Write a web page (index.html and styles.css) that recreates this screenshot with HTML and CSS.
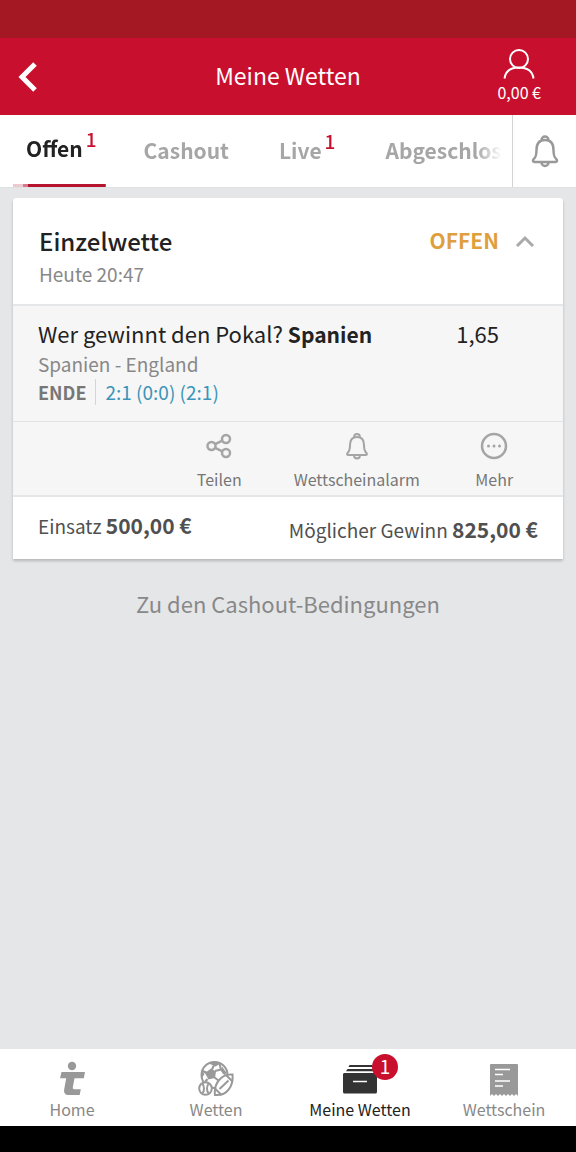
FILE: index.html
```html
<!DOCTYPE html>
<html lang="de">
<head>
<meta charset="utf-8">
<meta name="viewport" content="width=device-width, initial-scale=1">
<title>Meine Wetten</title>
<link rel="stylesheet" href="styles.css">
</head>
<body>
<svg class="defs" aria-hidden="true">
  <symbol id="bell" viewBox="0 0 28 34">
    <path d="M10.500 6a3.500 3.500 0 0 1 7 0M3.500 28h21c1.500 0 2-1.500 1-2.600-2.500-2.400-3-4-3-9.400 0-7-3-10-8.500-10S5.500 9 5.500 16c0 5.400-.5 7-3 9.400-1 1.100-.5 2.600 1 2.600zM10.500 28.500a3.500 3.500 0 0 0 7 0"/>
  </symbol>
</svg>
<div class="app">
  <div class="statusbar"></div>
  <header class="header">
    <button class="back" type="button" aria-label="Zurück">
      <svg class="back-icon" viewBox="0 0 20 30"><path d="M17 2 4 15l13 13"/></svg>
    </button>
    <h1 class="title">Meine Wetten</h1>
    <button class="account" type="button">
      <svg class="account-icon" viewBox="0 0 32 30"><circle cx="16" cy="10" r="9"/><path d="M1.500 29.500C2.500 22 8 18.500 16 18.500S29.500 22 30.500 29.500"/></svg>
      <span class="balance">0,00 €</span>
    </button>
  </header>
  <div class="tabs">
    <nav class="tab-list">
      <a class="tab active" href="#offen">Offen<sup class="count">1</sup></a>
      <a class="tab" href="#cashout">Cashout</a>
      <a class="tab" href="#live">Live<sup class="count">1</sup></a>
      <a class="tab" href="#abgeschlossen">Abgeschlossen</a>
    </nav>
    <button class="alarm" type="button" aria-label="Alarm"><svg class="alarm-icon"><use href="#bell"/></svg></button>
  </div>
  <main class="content">
    <article class="card">
      <header class="card-head">
        <div>
          <h2 class="card-title">Einzelwette</h2>
          <p class="muted">Heute 20:47</p>
        </div>
        <button class="status" type="button">OFFEN
          <svg class="chevron" viewBox="0 0 20 14"><path d="M2 13l8-8 8 8"/></svg>
        </button>
      </header>
      <section class="bet">
        <div>
          <p class="pick">Wer gewinnt den Pokal? <strong>Spanien</strong></p>
          <p class="muted">Spanien - England</p>
          <p class="result"><span class="end">ENDE</span><span class="score">2:1 (0:0) (2:1)</span></p>
        </div>
        <p class="odds">1,65</p>
      </section>
      <div class="actions">
        <button class="action share" type="button"><svg class="action-icon" viewBox="0 0 28 28"><circle cx="6.500" cy="14" r="4"/><circle cx="21" cy="7" r="4"/><circle cx="21" cy="21" r="4"/><path d="M10.100 12.200 17.400 8.700M10.100 15.800l7.300 3.500"/></svg>Teilen</button>
        <button class="action" type="button"><svg class="action-icon"><use href="#bell"/></svg>Wettscheinalarm</button>
        <button class="action" type="button"><svg class="action-icon" viewBox="0 0 28 28"><circle cx="14" cy="14" r="12"/><path class="dots" d="M8.500 14h.01M14 14h.01M19.500 14h.01"/></svg>Mehr</button>
      </div>
      <footer class="sums">
        <p>Einsatz <strong>500,00 €</strong></p>
        <p class="win">Möglicher Gewinn <strong>825,00 €</strong></p>
      </footer>
    </article>
    <a class="terms" href="#bedingungen">Zu den Cashout-Bedingungen</a>
  </main>
  <nav class="bottom">
    <a class="item" href="#home">
      <svg class="item-icon" viewBox="0 0 36 36"><circle cx="18" cy="5" r="4.200"/><path d="M7.500 11H31l-1.200 6.300h-9.300l-1.700 9c-.2 1.300.3 2 1.600 2h6.400L25.700 34H15c-3.800 0-5.500-2-4.800-5.800l2-10.900H6z"/></svg>
      Home</a>
    <a class="item" href="#wetten">
      <svg class="item-icon balls" viewBox="0 0 36 36">
        <circle cx="16.500" cy="14" r="13"/>
        <path d="M14 8.500 16.500 3M5 10l4 2M9.500 18 7 21M16.500 16.500l4 3M17 10l6-1.500M23 8.500 21.500 3M23 8.500l4 5"/>
        <path class="fill" d="m13 7.500 5 3-1 6.500-6.500 1.500L7 12zM11 2.500l5.500-2 6 2-5 3zM24 5.500l5 7-4 .5-2-4zM4 9l2.500 4L4 17z"/>
        <path class="front" d="M34.500 13.500C35.500 24 30 35 17 34c-1.500-11 6-21.500 17.500-20.500z"/>
        <path d="m21.500 28 9-8.500M16.500 27l7 7M27.500 13.500l7 7"/>
        <circle class="front" cx="7.500" cy="27.500" r="6.300"/>
        <path d="M4.500 23c2 2 2 7 0 9M10.500 23c-2 2-2 7 0 9"/>
      </svg>
      Wetten</a>
    <a class="item current" href="#meine-wetten">
      <span class="icon-wrap">
        <svg class="item-icon" viewBox="0 0 36 36"><path d="M7.500 4h23l1 2h-25zM5.500 8h26l1.500 2.300H4zM2.500 12h31c.8 0 1.500.7 1.500 1.500V31c0 .8-.7 1.500-1.500 1.500h-31C1.700 32.500 1 31.800 1 31V13.500c0-.8.7-1.500 1.500-1.500z"/><path class="slot" d="M11 20.500h14"/></svg>
        <span class="badge">1</span>
      </span>
      Meine Wetten</a>
    <a class="item" href="#wettschein">
      <svg class="item-icon" viewBox="0 0 36 36"><path d="M5 3h26q1 0 1 1v31l-2-2-2 2-2-2-2 2-2-2-2 2-2-2-2 2-2-2-2 2-2-2-2 2-2-2-2 2V4q0-1 1-1z"/><path class="slot" d="M9 8.500h15M9 13.500h8M9 20h15M9 25h8"/></svg>
      Wettschein</a>
  </nav>
  <div class="gesture"></div>
</div>
</body>
</html>
```
FILE: styles.css
```css
* { box-sizing: border-box; }
body, h1, h2, p { margin: 0; }
body {
  font-family: "Noto Sans CJK SC", "Noto Sans", sans-serif;
  font-size: 19px;
  line-height: 28px;
  color: #222;
  background: #e5e6e8;
}
button { font: inherit; color: inherit; background: none; border: 0; padding: 0; }
a { color: inherit; text-decoration: none; }
svg { display: block; fill: none; }
strong { font-weight: 700; font-size: 21px; }
.defs { position: absolute; width: 0; height: 0; }
.app { display: flex; flex-direction: column; min-height: 100vh; }
.statusbar { height: 38px; background: #a31822; }

.header {
  display: grid;
  grid-template-columns: 1fr auto 1fr;
  align-items: center;
  height: 77px;
  background: #c8102e;
  color: #fff;
}
.back { justify-self: start; padding: 0 18px; }
.back-icon { width: 20px; height: 30px; stroke: #fff; stroke-width: 5; }
.title { font-size: 23px; font-weight: 400; padding-bottom: 4px; }
.account { justify-self: end; display: flex; flex-direction: column; align-items: center; padding-right: 35px; }
.account-icon { width: 32px; height: 30px; stroke: #fff; stroke-width: 2; }
.balance { font-size: 16px; line-height: 26px; }

.tabs { display: flex; height: 73px; background: #fff; border-bottom: 1px solid #e0e1e3; }
.tab-list {
  flex: 1;
  min-width: 0;
  display: flex;
  gap: 26px;
  padding-left: 13px;
  overflow-x: auto;
  scrollbar-width: none;
  -webkit-mask-image: linear-gradient(to left, transparent 10px, #000 36px);
  mask-image: linear-gradient(to left, transparent 10px, #000 36px);
}
.tab { display: flex; padding: 19px 12px 0; font-size: 21px; line-height: 32px; font-weight: 700; color: #a6a6a6; white-space: nowrap; }
.tab.active {
  padding: 17px 9px 0 13px;
  color: #222;
  background: linear-gradient(to right, #edc9d0 10px, #d8788a 10px 15px, #b5152f 15px) bottom / 100% 3px no-repeat;
}
.count { font-size: 19px; line-height: 14px; font-weight: 500; color: #c8102e; padding-left: 3px; }
.alarm { width: 64px; border-left: 1px solid #d2d3d5; display: grid; place-items: center; }
.alarm-icon { width: 28px; height: 34px; stroke: #999; stroke-width: 2.500; }

.content { flex: 1; padding: 10px 13px; display: flex; flex-direction: column; align-items: center; }
.card { align-self: stretch; background: #fff; border-radius: 3px 3px 0 0; box-shadow: 0 2px 3px rgba(0, 0, 0, .2); }
.card-head { display: flex; justify-content: space-between; align-items: flex-start; height: 106px; padding: 24px 28px 0 26px; }
.card-title { font-size: 24px; line-height: 38px; font-weight: 500; }
.muted { color: #888; }
.status { display: flex; align-items: center; gap: 16px; font-size: 21px; line-height: 36px; font-weight: 700; color: #e09f3e; }
.chevron { width: 20px; height: 14px; stroke: #aaa; stroke-width: 3; }
.bet { display: flex; justify-content: space-between; padding: 11px 64px 15px 25px; background: #f6f6f6; border-top: 2px solid #e5e6e8; }
.pick, .odds { font-size: 22px; line-height: 32px; }
.result { display: flex; align-items: center; color: #777; }
.end { font-size: 18px; font-weight: 700; padding-right: 9px; border-right: 1px solid #d5d5d5; line-height: 26px; }
.score { color: #3a95b8; padding-left: 9px; }
.actions { display: grid; grid-template-columns: repeat(4, 1fr); height: 76px; background: #f6f6f6; border-top: 1px solid #e2e3e5; border-bottom: 2px solid #e5e6e8; }
.action { display: flex; flex-direction: column; align-items: center; gap: 6px; padding-top: 10px; font-size: 16px; line-height: 26px; color: #777; white-space: nowrap; }
.share { grid-column: 2; }
.action-icon { width: 28px; height: 28px; stroke: #a5a5a5; stroke-width: 2.500; }
.dots { stroke-width: 3; stroke-linecap: round; }
.sums { display: flex; justify-content: space-between; height: 62px; padding: 14px 25px 0; color: #505050; }
.win { padding-top: 4px; }
.terms { margin-top: 27px; font-size: 22px; line-height: 34px; color: #888; }

.bottom { display: grid; grid-template-columns: repeat(4, 1fr); height: 77px; background: #fff; }
.item { display: flex; flex-direction: column; align-items: center; padding-top: 12px; font-size: 16px; line-height: 24px; color: #888; }
.item-icon { width: 36px; height: 36px; fill: #999; }
.current { color: #222; }
.current .item-icon { fill: #333; }
.item-icon .slot { stroke: #fff; stroke-width: 1.500; }
.item-icon.balls { fill: none; stroke: #999; stroke-width: 2; }
.balls .fill { fill: #999; stroke: none; }
.balls .front { fill: #fff; }
.icon-wrap { position: relative; }
.badge { position: absolute; left: 30px; top: -7px; width: 26px; height: 26px; border-radius: 50%; background: #c8102e; color: #fff; font-size: 19px; text-align: center; }
.gesture { height: 26px; background: #000; }
```
